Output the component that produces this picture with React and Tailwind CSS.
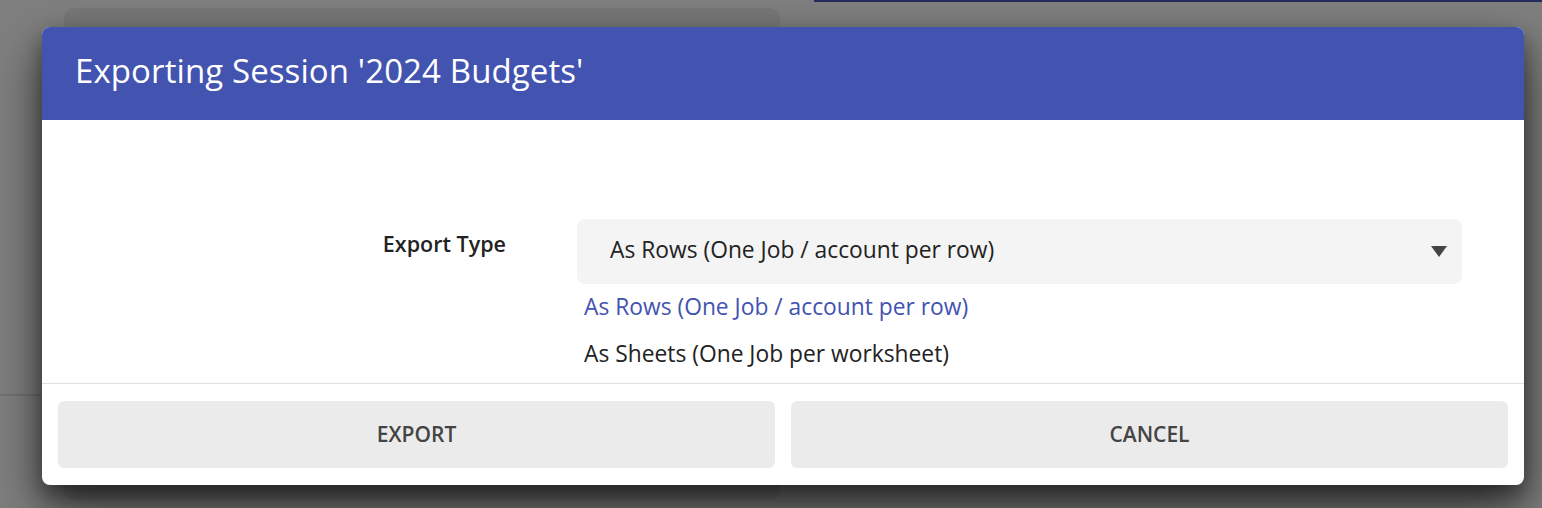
import { useState } from "react";

const font = { fontFamily: '"Open Sans", "Noto Sans", sans-serif' };

const ExportDialog = () => {
  const [exportType, setExportType] = useState("rows");

  const options = [
    { value: "rows", label: "As Rows (One Job / account per row)" },
    { value: "sheets", label: "As Sheets (One Job per worksheet)" },
  ];
  const current = options.find((o) => o.value === exportType);

  return (
    <div className="absolute left-[42px] top-[27px] w-[1482px] h-[458px] bg-white rounded-[8px] overflow-hidden shadow-[0_24px_50px_rgba(0,0,0,0.6),0_10px_20px_rgba(0,0,0,0.35)] flex flex-col">
      {/* header */}
      <div className="h-[93px] shrink-0 bg-[#4353b0] flex items-center pl-[33px] pb-[5px]">
        <h1 className="text-white text-[33px] font-normal tracking-[0.1px]">
          Exporting Session '2024 Budgets'
        </h1>
      </div>

      {/* body */}
      <div className="h-[264px] shrink-0 pt-[99px] border-b border-[#e0e0e0]">
        <div className="grid grid-cols-[464px_885px] gap-x-[71px]">
          <label className="text-right text-[21.5px] font-semibold text-[#222] pt-[9px]">
            Export Type
          </label>
          <div className="flex flex-col">
            <button className="h-[65px] w-full bg-[#f4f4f4] rounded-[8px] flex items-center justify-between pl-[33px] pr-[15px] pb-[2px] text-[22.8px] text-[#222]">
              <span>{current.label}</span>
              <svg width="16" height="12" viewBox="0 0 16 12">
                <path d="M0 1 L16 1 L8 12 Z" fill="#444" />
              </svg>
            </button>
            <ul className="pl-[7px]">
              {options.map((o) => (
                <li
                  key={o.value}
                  onClick={() => setExportType(o.value)}
                  className={`h-[47px] flex items-center text-[22.8px] cursor-pointer ${
                    o.value === exportType ? "text-[#4353b0]" : "text-[#222]"
                  }`}
                >
                  {o.label}
                </li>
              ))}
            </ul>
          </div>
        </div>
      </div>

      {/* footer */}
      <div className="flex-1 flex gap-[16px] px-[16px] pt-[17px] pb-[17px]">
        <button className="flex-1 bg-[#ebebeb] rounded-[6px] text-[21px] font-semibold text-[#444] uppercase">
          Export
        </button>
        <button className="flex-1 bg-[#ebebeb] rounded-[6px] text-[21px] font-semibold text-[#444] uppercase">
          Cancel
        </button>
      </div>
    </div>
  );
};

export default function App() {
  return (
    <div className="relative w-full h-[508px] overflow-hidden bg-[#7f7f7f]" style={font}>
      {/* dimmed page behind the overlay */}
      <div className="absolute left-[64px] top-[8px] w-[716px] h-[492px] bg-[#777777] rounded-[10px]" />
      <div className="absolute left-[814px] top-0 w-[728px] h-[2px] bg-[#262d5c]" />
      <div className="absolute left-0 top-[394px] w-[42px] h-[2px] bg-[#727272]" />
      <ExportDialog />
    </div>
  );
}
